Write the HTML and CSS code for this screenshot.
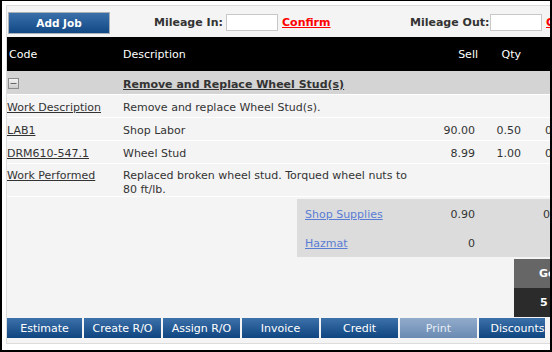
FILE: index.html
```html
<!DOCTYPE html>
<html>
<head>
<meta charset="utf-8">
<link rel="stylesheet" href="styles.css">
</head>
<body>
<div class="frame">
  <div class="panel">
    <div class="toolbar">
      <button class="btn-add">Add Job</button>
      <span class="mil-label mil-in">Mileage In:</span>
      <input class="mil-input" type="text">
      <span class="confirm-box"><a class="confirm" href="#">Confirm</a></span>
      <span class="mil-label mil-out">Mileage Out:</span>
      <input class="mil-input" type="text">
      <span class="confirm-box last"><a class="confirm" href="#">Confirm</a></span>
    </div>

    <div class="row head">
      <div class="c-code">Code</div>
      <div class="c-desc">Description</div>
      <div class="c-sell">Sell</div>
      <div class="c-qty">Qty</div>
      <div class="c-ext"></div>
    </div>

    <div class="row group">
      <div class="c-code">
        <svg class="toggle" width="11" height="11" viewBox="0 0 11 11">
          <defs>
            <linearGradient id="tg" x1="0" y1="0" x2="0" y2="1">
              <stop offset="0" stop-color="#f6f6f6"/>
              <stop offset="1" stop-color="#c9c9c9"/>
            </linearGradient>
          </defs>
          <rect x="0.5" y="0.5" width="10" height="10" fill="url(#tg)" stroke="#8c8c8c"/>
          <line x1="2.5" y1="5.5" x2="8.5" y2="5.5" stroke="#666" stroke-width="1"/>
        </svg>
      </div>
      <div class="c-desc"><a class="title" href="#">Remove and Replace Wheel Stud(s)</a></div>
      <div class="c-sell"></div>
      <div class="c-qty"></div>
      <div class="c-ext"></div>
    </div>

    <div class="row line">
      <div class="c-code"><a href="#">Work Description</a></div>
      <div class="c-desc">Remove and replace Wheel Stud(s).</div>
      <div class="c-sell"></div>
      <div class="c-qty"></div>
      <div class="c-ext"></div>
    </div>

    <div class="row line">
      <div class="c-code"><a href="#">LAB1</a></div>
      <div class="c-desc">Shop Labor</div>
      <div class="c-sell">90.00</div>
      <div class="c-qty">0.50</div>
      <div class="c-ext">0.00</div>
    </div>

    <div class="row line">
      <div class="c-code"><a href="#">DRM610-547.1</a></div>
      <div class="c-desc">Wheel Stud</div>
      <div class="c-sell">8.99</div>
      <div class="c-qty">1.00</div>
      <div class="c-ext">0.00</div>
    </div>

    <div class="row line tall">
      <div class="c-code"><a href="#">Work Performed</a></div>
      <div class="c-desc">Replaced broken wheel stud. Torqued wheel nuts to 80 ft/lb.</div>
      <div class="c-sell"></div>
      <div class="c-qty"></div>
      <div class="c-ext"></div>
    </div>

    <div class="supplies">
      <div class="srow">
        <div class="s-label"><a href="#">Shop Supplies</a></div>
        <div class="s-val">0.90</div>
        <div class="s-qty"></div>
        <div class="s-ext">0.00</div>
      </div>
      <div class="srow">
        <div class="s-label"><a href="#">Hazmat</a></div>
        <div class="s-val">0</div>
        <div class="s-qty"></div>
        <div class="s-ext"></div>
      </div>
    </div>

    <div class="total-head">Go</div>
    <div class="total-val">5</div>

    <div class="actions">
      <button class="act first">Estimate</button>
      <button class="act">Create R/O</button>
      <button class="act">Assign R/O</button>
      <button class="act">Invoice</button>
      <button class="act">Credit</button>
      <button class="act disabled">Print</button>
      <button class="act">Discounts</button>
    </div>
  </div>
</div>
</body>
</html>
```

FILE: styles.css
```css
* { box-sizing: border-box; }

html, body {
  margin: 0;
  padding: 0;
  background: #fff;
}

body {
  font-family: "DejaVu Sans", Verdana, sans-serif;
  font-size: 11px;
  color: #333;
}

.frame {
  width: 552px;
  height: 352px;
  border-style: solid;
  border-color: #000;
  border-width: 1px 2px 2px 2px;
  background: #fff;
  padding: 4px 0 0 4px;
  overflow: hidden;
}

.panel {
  width: 720px;
  height: 339px;
  border: 1px solid #dcdcdc;
  background: #f4f4f4;
}

/* toolbar */
.toolbar {
  height: 31px;
  display: flex;
  align-items: center;
  padding: 2px 0 0 1px;
}

.btn-add {
  width: 102px;
  height: 22px;
  margin: 0 44px 0 0;
  padding: 0;
  border: 1px solid #a9b0b8;
  background: linear-gradient(#3a70aa, #124884);
  color: #fff;
  font-family: "DejaVu Sans", Verdana, sans-serif;
  font-size: 10.5px;
  font-weight: bold;
  flex-shrink: 0;
}

.mil-label {
  font-weight: bold;
  color: #333;
  flex-shrink: 0;
  white-space: nowrap;
}
.mil-in { width: 72px; }
.mil-out { width: 80px; }

.mil-input {
  width: 52px;
  height: 17px;
  border: 1px solid #c8c8c8;
  background: #fff;
  margin: 0;
  padding: 0;
  flex-shrink: 0;
}

.confirm-box {
  width: 132px;
  padding-left: 4px;
  flex-shrink: 0;
}
.confirm-box.last { width: 80px; }

.confirm {
  color: #f00;
  font-weight: bold;
  text-decoration: underline;
}

/* grid rows */
.row {
  display: grid;
  grid-template-columns: 116px 290px 66px 46px 140px;
  align-items: center;
}

.c-sell, .c-qty { text-align: right; padding-right: 4px; }
.c-ext { padding-left: 20px; }

.head {
  height: 34px;
  background: #000;
  color: #fff;
  padding-top: 1px;
}
.head .c-code { padding-left: 2px; }
.head .c-sell { padding-right: 1px; }

.group {
  height: 24px;
  background: #d4d4d4;
  border-bottom: 1px solid #fff;
  padding-top: 3px;
}
.toggle {
  display: block;
  margin-left: 1px;
  margin-top: -1px;
}
.title {
  color: #333;
  font-weight: bold;
  text-decoration: underline;
}

.line {
  height: 23px;
  border-bottom: 1px solid #fff;
  line-height: 14px;
  padding-top: 4px;
}
.line a {
  color: #333;
  text-decoration: underline;
}

.line.tall {
  height: 33px;
  align-items: start;
  padding-top: 5px;
}

/* supplies */
.supplies {
  margin: 2px 0 0 290px;
  background: #dcdcdc;
  height: 58px;
}
.srow {
  height: 29px;
  display: grid;
  grid-template-columns: 116px 66px 46px 140px;
  align-items: center;
  padding-top: 1px;
}
.s-label { padding-left: 8px; }
.s-label a { color: #5a7dd4; text-decoration: underline; }
.s-val { text-align: right; padding-right: 4px; }
.s-ext { padding-left: 18px; }

/* totals */
.total-head, .total-val {
  margin-left: 507px;
  width: 150px;
  height: 29px;
  line-height: 29px;
  color: #fff;
  font-weight: bold;
}
.total-head {
  margin-top: 2px;
  background: #666;
  padding-left: 25px;
}
.total-val {
  background: #2b2b2b;
  padding-left: 26px;
}

/* action bar */
.actions {
  margin-top: 1px;
  width: 538px;
  height: 20px;
  display: flex;
  gap: 2px;
  overflow: hidden;
}
.act {
  flex: 0 0 77px;
  width: 77px;
  height: 20px;
  border: none;
  margin: 0;
  padding: 0;
  background: linear-gradient(#3c71aa, #0f4580);
  color: #fff;
  font-family: "DejaVu Sans", Verdana, sans-serif;
  font-size: 11px;
}
.act.first { flex-basis: 75px; width: 75px; }
.act.disabled {
  background: linear-gradient(#91abcb, #6a8ab3);
  color: #e9eef5;
}
```
